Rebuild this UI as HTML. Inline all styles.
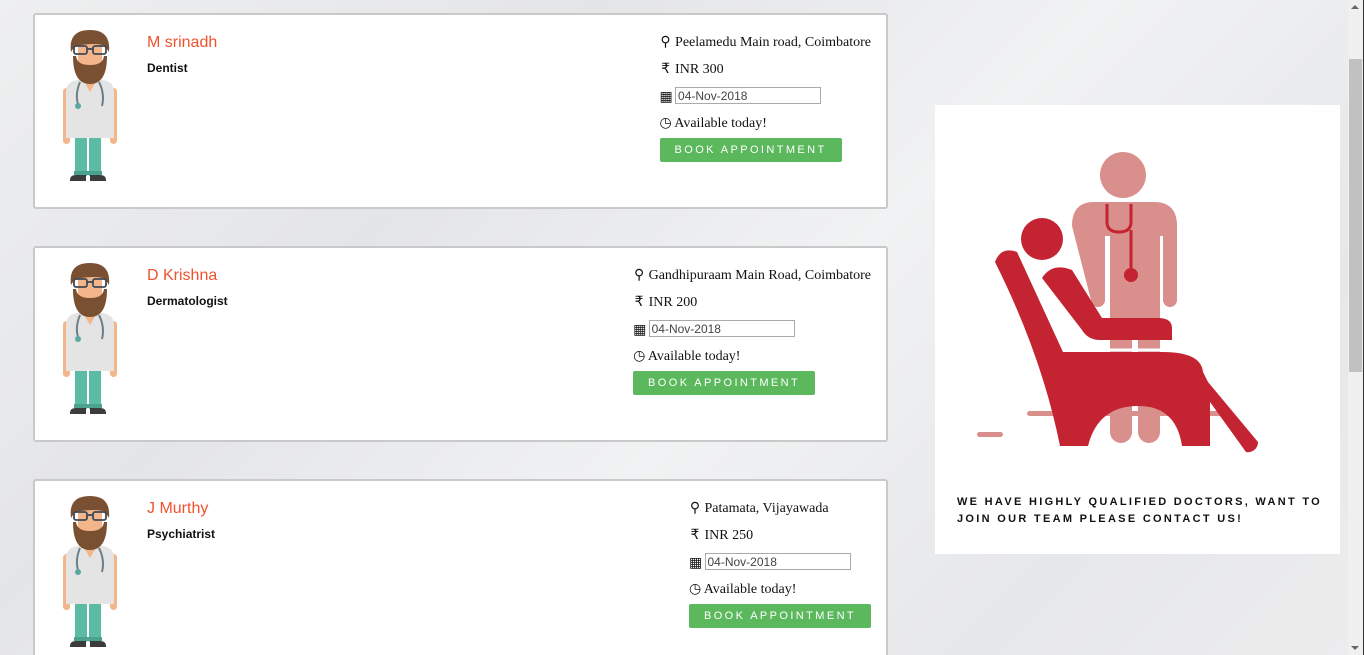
<!DOCTYPE html>
<html><head><meta charset="utf-8">
<style>
html,body{margin:0;padding:0;width:1364px;height:655px;overflow:hidden;}
body{background:linear-gradient(135deg,#eeeff0 0%,#e4e5e7 30%,#f1f2f3 55%,#e6e7e9 80%,#ededee 100%);position:relative;font-family:"Liberation Serif",serif;}
.card{position:absolute;left:33px;width:851px;height:192px;background:#fff;border:2px solid #c9c9c9;border-radius:3px;}
.doc{position:absolute;left:26px;top:13px;}
.name{position:absolute;left:112px;top:19px;font-family:"Liberation Sans",sans-serif;font-size:16px;color:#f0522f;}
.spec{position:absolute;left:112px;top:46px;font-family:"Liberation Sans",sans-serif;font-size:12px;font-weight:bold;color:#111;}
.info{position:absolute;right:15px;top:18px;font-size:14px;color:#111;}
.info div{height:27px;line-height:20px;white-space:nowrap;}
.info input{font-family:"Liberation Sans",sans-serif;font-size:12px;color:#444;border:1px solid #aaa;width:140px;height:15px;padding:0 2px;margin:0;vertical-align:1px;}
.info .btn{width:182px;height:24px;background:#5cb85c;color:#fff;font-family:"Liberation Sans",sans-serif;font-size:11px;letter-spacing:2.4px;text-align:center;line-height:24px;margin-top:-3px;border-radius:2px;}
.ic{display:inline-block;width:12px;text-align:center;}
.panel{position:absolute;left:935px;top:105px;width:405px;height:449px;background:#fff;}
.ptext{position:absolute;left:22px;top:389px;font-family:"Liberation Sans",sans-serif;font-size:11px;font-weight:bold;letter-spacing:2.3px;line-height:17px;color:#111;}
.sb{position:absolute;left:1348px;top:0;width:15px;height:655px;background:#f0f0f0;border-right:1px solid #333;}
.thumb{position:absolute;left:1px;top:59px;width:13px;height:313px;background:#c1c1c1;}
</style></head><body>

<svg width="0" height="0" style="position:absolute">
<defs>
<g id="doc">
<rect x="14" y="108" width="12" height="40" fill="#5bbba5"/>
<rect x="28" y="108" width="12" height="40" fill="#5bbba5"/>
<rect x="13" y="143" width="14" height="4" fill="#4aa28f"/>
<rect x="27" y="143" width="14" height="4" fill="#4aa28f"/>
<path d="M9 152 q0-5 6-5 h10 v6 h-16z M29 147 h10 q6 0 6 5 v1 h-16z" fill="#3c3c3c"/>
<rect x="2" y="60" width="7" height="56" rx="3.5" fill="#f2b68a"/>
<rect x="49" y="60" width="7" height="56" rx="3.5" fill="#f2b68a"/>
<path d="M5 64 q0-10 11-12 h26 q11 2 11 12 v46 h-48z" fill="#e4e4e4"/>
<path d="M22 52 l7 12 l7-12z" fill="#f2b68a"/>
<path d="M19 54 q-5 12-2 22 M38 54 q6 12 3 24" stroke="#6d7f86" stroke-width="2" fill="none"/>
<circle cx="17" cy="78" r="3" fill="#5aa8a0"/>
<rect x="17" y="8" width="24" height="44" rx="8" fill="#f2b68a"/>
<path d="M12 28 q0 28 17 28 q17 0 17-28 h-3 q-1 9-14 9 q-13 0-14-9z" fill="#7a5033"/>
<path d="M10 24 q-3-22 19-22 q21 0 19 22 l-4-6 q-8-4-30 0z" fill="#7a5033"/>
<rect x="13" y="18" width="13" height="8" rx="2" fill="none" stroke="#3f4a55" stroke-width="1.8"/>
<rect x="32" y="18" width="13" height="8" rx="2" fill="none" stroke="#3f4a55" stroke-width="1.8"/>
<line x1="26" y1="21" x2="32" y2="21" stroke="#3f4a55" stroke-width="1.8"/>
</g>
</defs></svg>

<div class="card" style="top:13px;">
<svg class="doc" width="58" height="157" viewBox="0 0 58 157"><use href="#doc"/></svg>
<div class="name">M srinadh</div><div class="spec">Dentist</div>
<div class="info">
<div><span class="ic">&#9906;</span> Peelamedu Main road, Coimbatore</div>
<div><span class="ic">&#8377;</span> INR 300</div>
<div><span class="ic">&#9638;</span> <input value="04-Nov-2018"></div>
<div><span class="ic">&#9719;</span> Available today!</div>
<div class="btn">BOOK APPOINTMENT</div>
</div></div>

<div class="card" style="top:246px;">
<svg class="doc" width="58" height="157" viewBox="0 0 58 157"><use href="#doc"/></svg>
<div class="name">D Krishna</div><div class="spec">Dermatologist</div>
<div class="info">
<div><span class="ic">&#9906;</span> Gandhipuraam Main Road, Coimbatore</div>
<div><span class="ic">&#8377;</span> INR 200</div>
<div><span class="ic">&#9638;</span> <input value="04-Nov-2018"></div>
<div><span class="ic">&#9719;</span> Available today!</div>
<div class="btn">BOOK APPOINTMENT</div>
</div></div>

<div class="card" style="top:479px;">
<svg class="doc" width="58" height="157" viewBox="0 0 58 157"><use href="#doc"/></svg>
<div class="name">J Murthy</div><div class="spec">Psychiatrist</div>
<div class="info">
<div><span class="ic">&#9906;</span> Patamata, Vijayawada</div>
<div><span class="ic">&#8377;</span> INR 250</div>
<div><span class="ic">&#9638;</span> <input value="04-Nov-2018"></div>
<div><span class="ic">&#9719;</span> Available today!</div>
<div class="btn">BOOK APPOINTMENT</div>
</div></div>

<div class="panel">
<svg width="405" height="360" viewBox="935 105 405 360" style="position:absolute;left:0;top:0">
<g fill="#d98f8b">
<circle cx="1123" cy="175" r="23"/>
<path d="M1072 226 q0-24 22-24 h60 q23 0 23 24 v74 a7 7 0 0 1-14 0 v-64 h-3 v196 a11 11 0 0 1-22 0 v-100 h-6 v100 a11 11 0 0 1-22 0 v-196 h-5 v64 a7 7 0 0 1-14 0z"/>
<rect x="977" y="432" width="26" height="5" rx="2.5"/>
<rect x="1027" y="411" width="200" height="5" rx="2.5"/>
</g>
<path d="M1107 204 v18 q0 10 12 10 q12 0 12-10 v-18" stroke="#c42431" stroke-width="3" fill="none"/>
<line x1="1131" y1="230" x2="1131" y2="268" stroke="#c42431" stroke-width="3"/>
<circle cx="1131" cy="275" r="7" fill="#c42431"/>
<g fill="#c42431">
<circle cx="1042" cy="239" r="21"/>
<path d="M995 262 q6-16 22-10 l46 100 h100 q38 0 40 20 l5 10 l50 60 a10 10 0 0 1-12 10 l-36-50 v44 h-28 q-6-40-44-40 q-40 0-50 40 h-28 q-18-90-65-184z"/>
<path d="M1042 278 q10-16 30-8 l30 48 h56 q14 0 14 10 v12 h-72 q-12 0-18 -10z"/>
</g>
<path d="M1040 296 l38 54 h90" stroke="#fff" stroke-width="3" fill="none"/>
</svg>
<div class="ptext">WE HAVE HIGHLY QUALIFIED DOCTORS, WANT TO<br>JOIN OUR TEAM PLEASE CONTACT US!</div>
</div>

<div class="sb"><div class="thumb"></div>
<div style="position:absolute;left:3px;top:5px;border-left:4px solid transparent;border-right:4px solid transparent;border-bottom:4px solid #666;"></div>
<div style="position:absolute;left:3px;top:646px;border-left:4px solid transparent;border-right:4px solid transparent;border-top:4px solid #666;"></div>
</div>
</body></html>
